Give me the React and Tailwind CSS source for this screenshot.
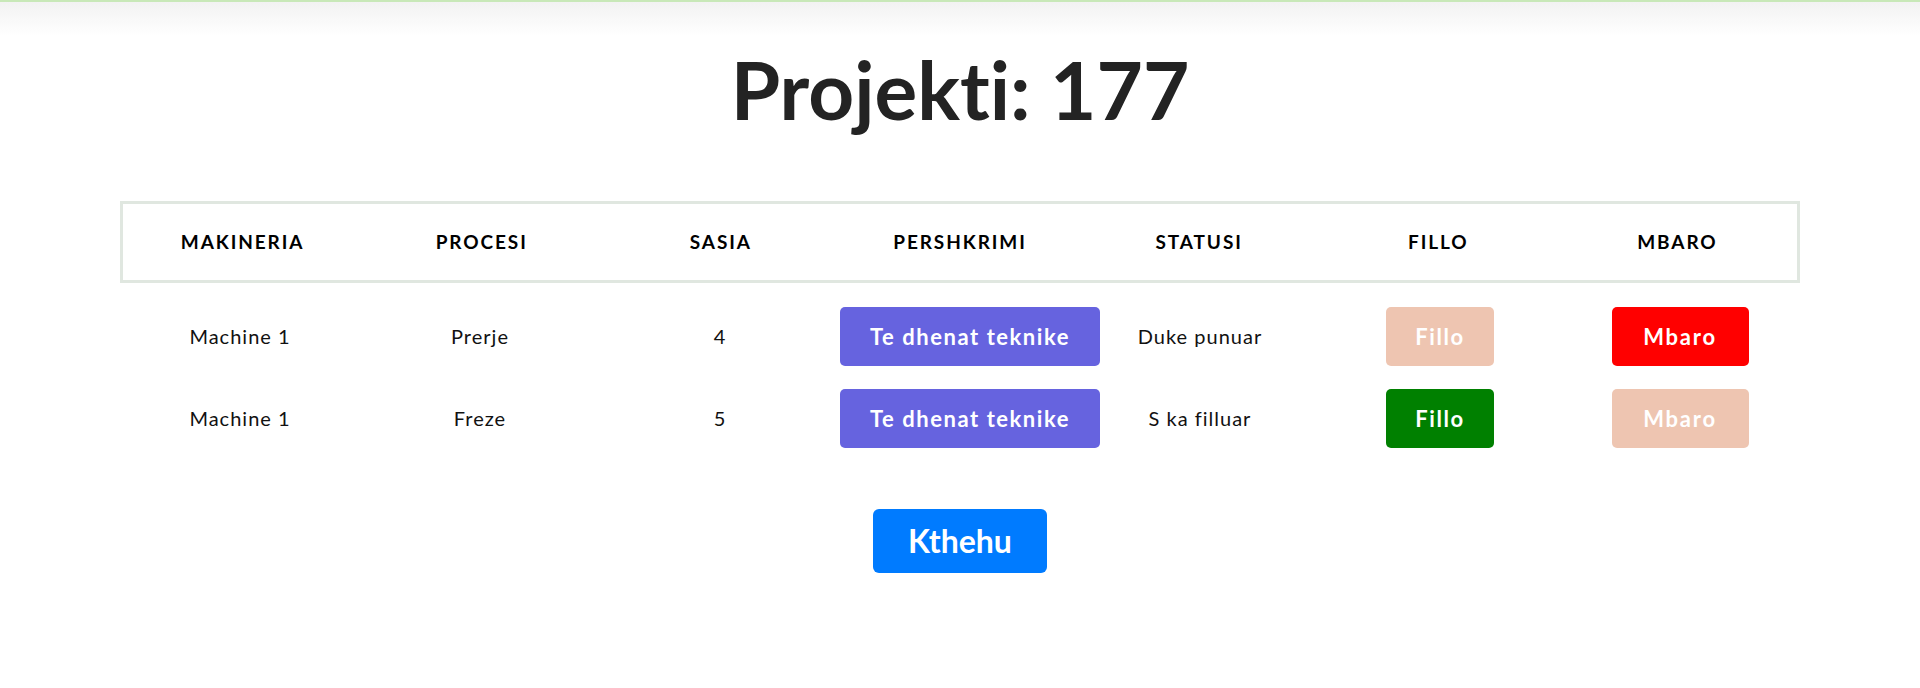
import React from "react";

const rows = [
  { makineria: "Machine 1", procesi: "Prerje", sasia: 4, statusi: "Duke punuar", started: true },
  { makineria: "Machine 1", procesi: "Freze", sasia: 5, statusi: "S ka filluar", started: false },
];

const headers = ["MAKINERIA", "PROCESI", "SASIA", "PERSHKRIMI", "STATUSI", "FILLO", "MBARO"];

const App = () => {
  return (
    <div className="min-h-[688px] bg-white font-['Lato',sans-serif] text-[#222] [font-variant-ligatures:none]">
      <div className="h-[2px] bg-[#c8e8b8]" />
      <div className="h-[34px] bg-gradient-to-b from-[#f2f2f2] to-white -mb-[34px]" />

      <h1 className="mt-[47px] text-center text-[80px] leading-[80px] font-bold text-[#232323]">
        Projekti: 177
      </h1>

      <div className="mx-auto mt-[72px] w-[1680px]">
        <div className="grid h-[82px] grid-cols-7 items-center border-[3px] border-[#e0e7e0] text-center text-[19px] font-bold tracking-[0.1em] text-black">
          {headers.map((h) => (
            <div key={h}>{h}</div>
          ))}
        </div>

        <div className="mt-[12px]">
          {rows.map((row, i) => (
            <div
              key={i}
              className="grid h-[82px] grid-cols-7 items-center text-center text-[20px] font-normal tracking-[0.05em] text-[#111]"
            >
              <div>{row.makineria}</div>
              <div>{row.procesi}</div>
              <div>{row.sasia}</div>
              <div className="flex justify-start">
                <button
                  type="button"
                  className="h-[59px] w-[260px] shrink-0 rounded-[5px] bg-[#6663df] text-[22px] font-bold tracking-[0.07em] text-white"
                >
                  Te dhenat teknike
                </button>
              </div>
              <div>{row.statusi}</div>
              <div className="flex justify-center">
                <button
                  type="button"
                  className={`h-[59px] w-[108px] shrink-0 rounded-[5px] text-[22px] font-bold tracking-[0.07em] text-white ${
                    row.started ? "bg-[#eec5b1]" : "bg-[#008000]"
                  }`}
                >
                  Fillo
                </button>
              </div>
              <div className="flex justify-center">
                <button
                  type="button"
                  className={`h-[59px] w-[137px] shrink-0 rounded-[5px] text-[22px] font-bold tracking-[0.08em] text-white ${
                    row.started ? "bg-[#ff0000]" : "bg-[#eec5b1]"
                  }`}
                >
                  Mbaro
                </button>
              </div>
            </div>
          ))}
        </div>
      </div>

      <div className="mt-[50px] flex justify-center">
        <button
          type="button"
          className="h-[64px] w-[174px] rounded-[6px] bg-[#007bff] text-[32px] font-bold text-white"
        >
          Kthehu
        </button>
      </div>
    </div>
  );
};

export default App;
